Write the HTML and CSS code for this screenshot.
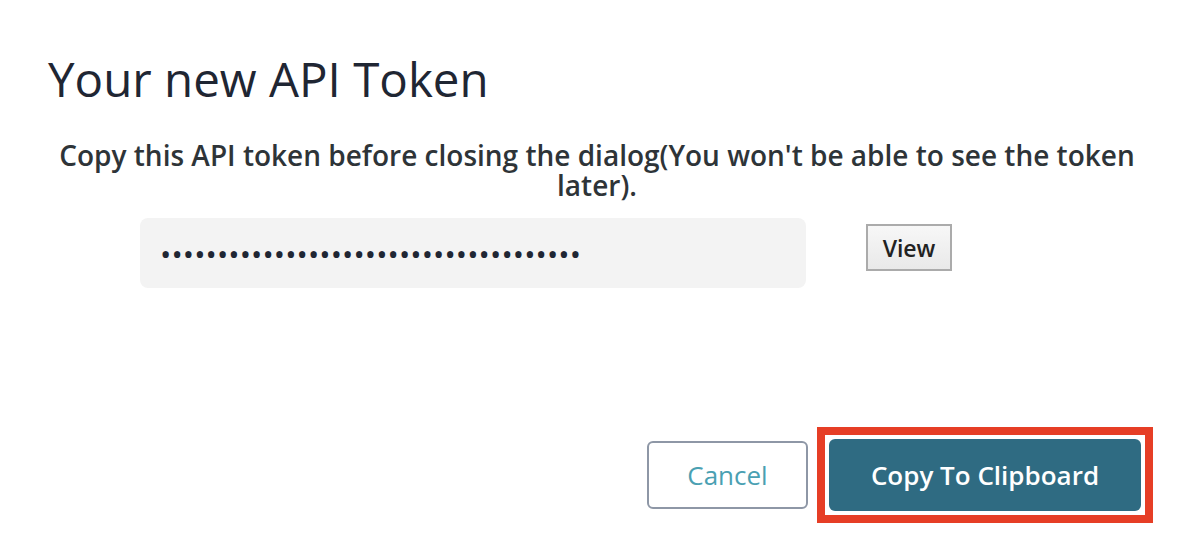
FILE: index.html
```html
<!DOCTYPE html>
<html lang="en">
<head>
<meta charset="utf-8">
<title>Your new API Token</title>
<link rel="stylesheet" href="styles.css">
</head>
<body>
<div class="dialog">
  <h1 class="title">Your new API Token</h1>
  <p class="message">Copy this API token before closing the dialog(You won't be able to see the token later).</p>
  <div class="token-row">
    <input class="token-field" type="password" value="0123456789012345678901234567890123456" readonly>
    <button class="view-btn" type="button">View</button>
  </div>
  <div class="actions">
    <button class="btn btn-cancel" type="button">Cancel</button>
    <div class="highlight">
      <button class="btn btn-copy" type="button">Copy To Clipboard</button>
    </div>
  </div>
</div>
</body>
</html>
```

FILE: styles.css
```css
html, body {
  margin: 0;
  padding: 0;
  background: #ffffff;
}
body {
  font-family: "Open Sans", "Noto Sans", sans-serif;
  width: 1194px;
  height: 556px;
  overflow: hidden;
}
.dialog {
  display: flex;
  flex-direction: column;
  height: 556px;
  box-sizing: border-box;
  padding: 48px 48px 0 48px;
}
.title {
  margin: 0;
  font-size: 47.5px;
  line-height: 62px;
  font-weight: 400;
  color: #1f2633;
}
.message {
  margin: 30px 0 0 0;
  font-size: 28px;
  line-height: 30px;
  font-weight: 600;
  color: #2e3438;
  text-align: center;
}
.token-row {
  display: flex;
  align-items: flex-start;
  margin: 18px 0 0 92px;
  gap: 60px;
}
.token-field {
  width: 666px;
  height: 70px;
  box-sizing: border-box;
  border: none;
  border-radius: 8px;
  background: #f3f3f3;
  padding: 0 20px;
  font-family: "Open Sans", sans-serif;
  font-size: 30px;
  color: #1f2633;
  letter-spacing: 0.1px;
  outline: none;
}
.view-btn {
  margin-top: 6px;
  width: 86px;
  height: 47px;
  box-sizing: border-box;
  border: 2px solid #ababab;
  border-radius: 0;
  background: linear-gradient(#f7f7f7, #e9e9e9);
  font-family: "Open Sans", sans-serif;
  font-size: 23px;
  font-weight: 600;
  color: #222222;
  padding: 0;
}
.actions {
  margin-top: auto;
  margin-bottom: 33px;
  margin-right: -7px;
  display: flex;
  justify-content: flex-end;
  align-items: center;
  gap: 9px;
}
.btn {
  box-sizing: border-box;
  font-family: "Open Sans", sans-serif;
  font-size: 26px;
  border-radius: 6px;
  padding: 0;
}
.btn-cancel {
  width: 161px;
  height: 68px;
  background: #ffffff;
  border: 2px solid #8e97a6;
  color: #4aa0b2;
  font-weight: 400;
}
.highlight {
  display: flex;
  border: 8px solid #e63e26;
  padding: 4px;
  background: #ffffff;
}
.btn-copy {
  width: 312px;
  height: 72px;
  background: #2f6b82;
  border: none;
  color: #ffffff;
  font-weight: 600;
}
```
